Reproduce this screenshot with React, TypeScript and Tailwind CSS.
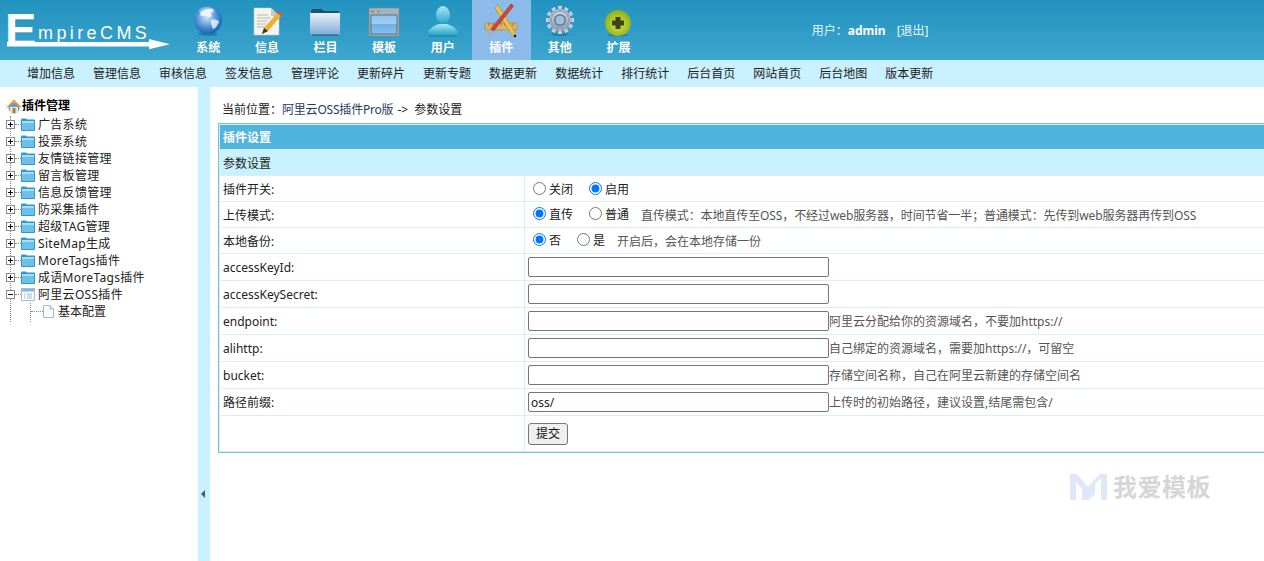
import React from "react";

const Globe = () => (
  <svg width="34" height="34" viewBox="0 0 34 34">
    <defs>
      <radialGradient id="gl" cx="0.45" cy="0.4" r="0.65">
        <stop offset="0" stopColor="#cfe6f8" />
        <stop offset="0.55" stopColor="#4d93d8" />
        <stop offset="1" stopColor="#0f5aa8" />
      </radialGradient>
    </defs>
    <ellipse cx="17" cy="31" rx="10" ry="2" fill="#0f5f86" opacity="0.45" />
    <circle cx="17" cy="17" r="14" fill="url(#gl)" />
    <path d="M10 9c3-3 8-4 11-3 2 1 1 3-1 3-1 2 2 3 0 5-2 1-3 0-5-1-2-1-3 1-5 0-1-1-1-3 0-4z" fill="#f2f8fc" opacity="0.9" />
    <path d="M20 17c3-1 6 0 8 1-1 4-3 7-6 8-1-3-3-6-2-9z" fill="#e7f2fa" opacity="0.85" />
    <ellipse cx="16" cy="8" rx="8" ry="4" fill="#fff" opacity="0.3" />
  </svg>
);

const Doc = () => (
  <svg width="34" height="34" viewBox="0 0 34 34">
    <path d="M4 5h17l8 8v19H4z" fill="#f4f3ec" stroke="#cfcfc4" strokeWidth="0.5" />
    <path d="M21 5v8h8z" fill="#c9c9bf" />
    <path d="M7 12h11M7 15h13M7 18h10M7 21h9M7 24h8" stroke="#a9a9a0" strokeWidth="0.8" />
    <path d="M12 31l2-6L27 10l4 3-13 15z" fill="#efb12d" />
    <path d="M27 10l2-2 4 3-2 2z" fill="#d65a42" />
    <path d="M12 31l2-6 4 3z" fill="#3b3125" />
  </svg>
);

const Folder = () => (
  <svg width="34" height="34" viewBox="0 0 34 34">
    <defs>
      <linearGradient id="fo" x1="0" y1="0" x2="0" y2="1">
        <stop offset="0" stopColor="#eaf1f6" />
        <stop offset="1" stopColor="#7fabd6" />
      </linearGradient>
    </defs>
    <path d="M3 9c0-2 1-3 2-3h8c1 0 2 1 3 2h14c1 0 1 1 1 2v1H3z" fill="#1f4f72" />
    <path d="M2 10h30v19c0 2-1 3-2 3H4c-1 0-2-1-2-3z" fill="url(#fo)" />
    <path d="M4 32h26" stroke="#1f5f85" strokeWidth="1.200" />
  </svg>
);

const WindowIcon = () => (
  <svg width="34" height="34" viewBox="0 0 34 34">
    <defs>
      <linearGradient id="wi" x1="0" y1="0" x2="0" y2="1">
        <stop offset="0" stopColor="#8fc4ec" />
        <stop offset="0.49" stopColor="#9fd0f2" />
        <stop offset="0.5" stopColor="#6eb0e2" />
        <stop offset="1" stopColor="#86bfe9" />
      </linearGradient>
    </defs>
    <rect x="2" y="5" width="30" height="28" fill="#a5b3ba" stroke="#7a8890" strokeWidth="0.7" />
    <rect x="4" y="12" width="26" height="19" fill="url(#wi)" stroke="#39566a" strokeWidth="0.7" />
    <circle cx="5.500" cy="8.500" r="1" fill="#cc4a3a" />
    <circle cx="8.500" cy="8.500" r="1" fill="#d7b33a" />
    <circle cx="11.500" cy="8.500" r="1" fill="#4ca346" />
  </svg>
);

const User = () => (
  <svg width="34" height="34" viewBox="0 0 34 34">
    <defs>
      <linearGradient id="us" x1="0" y1="0" x2="0" y2="1">
        <stop offset="0" stopColor="#a9e8f2" />
        <stop offset="1" stopColor="#25a4c4" />
      </linearGradient>
    </defs>
    <ellipse cx="17" cy="12" rx="7" ry="9" fill="url(#us)" />
    <path d="M2 32c0-7 6-9 11-11h8c5 2 11 4 11 11z" fill="url(#us)" />
    <path d="M3 33h28" stroke="#1b7fa1" strokeWidth="1" />
  </svg>
);

const Tools = () => (
  <svg width="36" height="36" viewBox="0 0 36 36">
    <path d="M2 21h32v7H2z" fill="#d9b564" stroke="#a78537" strokeWidth="0.6" />
    <path d="M6 21v3M10 21v3M14 21v3M18 21v3M22 21v3M26 21v3M30 21v3" stroke="#7c6226" strokeWidth="0.7" />
    <path d="M12 6l3.500-3 17.500 29-1.500 1.500-3-1z" fill="#eec24a" stroke="#9d7d1c" strokeWidth="0.5" />
    <path d="M28 2l2.500 2-20 25-3-1.500z" fill="#cf4540" stroke="#8c2320" strokeWidth="0.5" />
    <path d="M7 27l4 2.500-5 4.500c-2 1-4-1-3-2z" fill="#a8b0b8" />
    <circle cx="32" cy="34" r="1.200" fill="#111" />
  </svg>
);

const Gear = () => (
  <svg width="34" height="34" viewBox="0 0 34 34">
    <defs>
      <linearGradient id="ge" x1="0" y1="0" x2="0" y2="1">
        <stop offset="0" stopColor="#d9dde8" />
        <stop offset="1" stopColor="#8e96ad" />
      </linearGradient>
    </defs>
    <ellipse cx="17" cy="31.500" rx="9" ry="1.500" fill="#15607f" opacity="0.5" />
    <g fill="url(#ge)">
      <circle cx="17" cy="17" r="10.500" />
      {[0, 30, 60, 90, 120, 150, 180, 210, 240, 270, 300, 330].map((a) => (
        <rect key={a} x="15" y="3" width="4" height="6" transform={`rotate(${a} 17 17)`} />
      ))}
    </g>
    <circle cx="17" cy="17" r="6" fill="#4f7fa0" />
    <circle cx="17" cy="17" r="4.500" fill="#9fc0d8" />
  </svg>
);

const Plus = () => (
  <svg width="34" height="34" viewBox="0 0 34 34">
    <defs>
      <radialGradient id="pl" cx="0.5" cy="0.55" r="0.6">
        <stop offset="0" stopColor="#d8e850" />
        <stop offset="1" stopColor="#86a814" />
      </radialGradient>
    </defs>
    <ellipse cx="17" cy="32" rx="10" ry="1.500" fill="#15607f" opacity="0.5" />
    <circle cx="17" cy="20" r="13" fill="url(#pl)" />
    <path d="M14.500 14h5v3.500H23v5h-3.500V26h-5v-3.500H11v-5h3.500z" fill="#3c4210" />
  </svg>
);

const nav: [string, React.ReactNode][] = [
  ["系统", <Globe />],
  ["信息", <Doc />],
  ["栏目", <Folder />],
  ["模板", <WindowIcon />],
  ["用户", <User />],
  ["插件", <Tools />],
  ["其他", <Gear />],
  ["扩展", <Plus />],
];

const sub = ["增加信息", "管理信息", "审核信息", "签发信息", "管理评论", "更新碎片", "更新专题", "数据更新", "数据统计", "排行统计", "后台首页", "网站首页", "后台地图", "版本更新"];

const tree = ["广告系统", "投票系统", "友情链接管理", "留言板管理", "信息反馈管理", "防采集插件", "超级TAG管理", "SiteMap生成", "MoreTags插件", "成语MoreTags插件"];

const Box = ({ minus }: { minus?: boolean }) => (
  <svg width="9" height="9" viewBox="0 0 9 9" className="shrink-0 bg-white relative">
    <rect x="0.500" y="0.500" width="8" height="8" fill="#fff" stroke="#8a8a8a" />
    <path d={minus ? "M2 4.500h5" : "M2 4.500h5M4.500 2v5"} stroke="#111" />
  </svg>
);

const TreeFolder = () => (
  <svg width="14" height="13" viewBox="0 0 14 13" className="shrink-0">
    <path d="M0 2c0-1 .5-1.500 1-1.500h4l1 1h7c.6 0 1 .4 1 1V12c0 .6-.4 1-1 1H1c-.6 0-1-.4-1-1z" fill="#2a9bd1" />
    <rect x="1" y="3" width="12" height="9" fill="#6fc0e8" />
    <rect x="1" y="3" width="12" height="2" fill="#a8def5" />
  </svg>
);

const TreeWindow = () => (
  <svg width="14" height="13" viewBox="0 0 14 13" className="shrink-0">
    <rect x="0.500" y="0.500" width="13" height="12" fill="#f7fbff" stroke="#a9bccd" />
    <rect x="1" y="1" width="12" height="2.500" fill="#7db6e6" />
    <path d="M3 6h1.500M3 8h1.500M3 10h1.500M6 6h5M6 8h5M6 10h5" stroke="#a9bccd" />
  </svg>
);

const TreeDoc = () => (
  <svg width="11" height="13" viewBox="0 0 11 13" className="shrink-0">
    <path d="M.5.500h6.500l3.500 3.500v8.500H.5z" fill="#fbfdff" stroke="#a9b6c4" />
    <path d="M7 .500v3.500h3.500" fill="#dfe8f0" stroke="#a9b6c4" />
  </svg>
);

const Home = () => (
  <svg width="16" height="16" viewBox="0 0 16 16" className="shrink-0">
    <circle cx="8" cy="10" r="5.500" fill="#5da0d8" />
    <path d="M4 9v6h8V9" fill="#e9e6d8" />
    <path d="M0.500 9L8 1.500 15.500 9l-1.500.5L8 4 2 9.500z" fill="#e89a2c" />
    <rect x="6.500" y="10" width="3" height="5" fill="#b9792a" />
  </svg>
);

const Radio = ({ checked, label, gap }: { checked?: boolean; label: string; gap?: boolean }) => (
  <label className={`inline-flex items-center ${gap ? "ml-[16px]" : "ml-[5px]"}`}>
    <input type="radio" defaultChecked={checked} name={label} className="w-[13px] h-[13px] mr-[3px] -mt-[2px]" />
    <span>{label}</span>
  </label>
);

const Row = ({ label, h, children }: { label?: string; h: string; children: React.ReactNode }) => (
  <tr>
    <td className={`${h} bg-white pl-[3px] align-middle`}>{label}</td>
    <td className={`${h} bg-white pl-[3px] align-middle whitespace-nowrap`}>{children}</td>
  </tr>
);

const Field = ({ value, note }: { value?: string; note?: string }) => (
  <div className="flex items-center">
    <input
      defaultValue={value}
      className="w-[301px] h-[20px] shrink-0 border border-[#767676] rounded-[2px] bg-white px-[2px] text-[12px] text-[#222] outline-none"
    />
    {note && <span className="text-[#555]">{note}</span>}
  </div>
);

export default function App() {
  return (
    <div className="relative w-[1264px] h-[561px] overflow-hidden bg-white text-[12px] leading-[17px] text-[#222] font-['Noto_Sans','Noto_Sans_CJK_SC',sans-serif]">
      <header className="h-[60px] flex bg-gradient-to-b from-[#2192bf] to-[#3ca6ce]">
        <svg width="179" height="60" viewBox="0 0 179 60" className="shrink-0">
          <text x="5" y="46" fontSize="47" fontWeight="700" fill="#fff" fontFamily="'Liberation Sans',sans-serif">E</text>
          <text x="38" y="39" fontSize="18" fill="#fff" letterSpacing="3.400" fontFamily="'Liberation Sans',sans-serif">mpireCMS</text>
          <rect x="7" y="42" width="145" height="4.500" fill="#fff" />
          <path d="M149 39l21 5.200-21 5z" fill="#fff" />
        </svg>
        <nav className="flex">
          {nav.map(([t, icon]) => (
            <div key={t} className={`w-[58.6px] flex flex-col items-center pt-[2px] ${t === "插件" ? "bg-[#8cbbea]" : ""}`}>
              <div className="h-[36px] flex items-center justify-center">{icon}</div>
              <div className="font-bold text-white leading-[18px] pt-[1px]">{t}</div>
            </div>
          ))}
        </nav>
        <div className="ml-[164px] pt-[22px] text-[#e6f7ff] whitespace-nowrap">
          用户：<b className="text-white">admin</b>
          <span className="ml-[11px]">[退出]</span>
        </div>
      </header>

      <div className="h-[27px] bg-[#c9f1ff] flex items-center pl-[27px] gap-[18px] whitespace-nowrap">
        {sub.map((s) => (
          <span key={s}>{s}</span>
        ))}
      </div>

      <div className="flex h-[474px]">
        <aside className="relative w-[198px] shrink-0 pl-[6px] pt-[10px]">
          <div className="flex items-center h-[17px] font-bold text-black">
            <Home />
            <span>插件管理</span>
          </div>
          <div className="relative mt-[2px]">
            <div className="absolute left-[4px] top-0 h-[206px] border-l border-dotted border-[#888]" />
            <div className="absolute left-[24px] top-[187px] h-[19px] border-l border-dotted border-[#888]" />
            {tree.map((t) => (
              <div key={t} className="relative flex items-center h-[17px] whitespace-nowrap tracking-[0.3px]">
                <Box />
                <span className="w-[6px] border-t border-dotted border-[#888]" />
                <TreeFolder />
                <span className="ml-[3px]">{t}</span>
              </div>
            ))}
            <div className="relative flex items-center h-[17px] whitespace-nowrap tracking-[0.3px]">
              <Box minus />
              <span className="w-[6px] border-t border-dotted border-[#888]" />
              <TreeWindow />
              <span className="ml-[3px]">阿里云OSS插件</span>
            </div>
            <div className="relative flex items-center h-[17px] pl-[25px] whitespace-nowrap">
              <span className="w-[12px] border-t border-dotted border-[#888]" />
              <TreeDoc />
              <span className="ml-[4px]">基本配置</span>
            </div>
          </div>
        </aside>

        <div className="w-[12px] shrink-0 bg-[#c9f1ff] flex justify-center items-start pt-[403px]">
          <svg width="4" height="8" viewBox="0 0 4 8" className="-ml-[2px]">
            <path d="M4 0v8L0 4z" fill="#4f5a60" />
          </svg>
        </div>

        <main className="flex-1 pl-[8px] pt-[14px] min-w-0">
          <div className="pl-[4px] h-[17px] whitespace-nowrap">
            当前位置：<span className="text-[#1f3a5f] tracking-[-0.2px]">阿里云OSS插件Pro版</span>
            <span className="ml-[4px]">-&gt;</span>
            <span className="ml-[6px]">参数设置</span>
          </div>
          <table className="mt-[5px] w-[1100px] border border-[#7dbdd3] border-separate border-spacing-[1px] bg-[#d7f0f6] table-fixed">
            <colgroup>
              <col className="w-[304px]" />
              <col />
            </colgroup>
            <tbody>
              <tr>
                <td colSpan={2} className="h-[24px] bg-[#4fb4de] pl-[3px] font-bold text-white align-middle">插件设置</td>
              </tr>
              <tr>
                <td colSpan={2} className="h-[25px] bg-[#c9f1ff] pl-[3px] pt-[2px] align-middle">参数设置</td>
              </tr>
              <Row label="插件开关:" h="h-[25px] pt-[2px]">
                <Radio label="关闭" />
                <Radio label="启用" checked gap />
              </Row>
              <Row label="上传模式:" h="h-[25px] pt-[1px]">
                <Radio label="直传" checked />
                <Radio label="普通" gap />
                <span className="ml-[12px] text-[#555] tracking-[-0.1px]">直传模式：本地直传至OSS，不经过web服务器，时间节省一半；普通模式：先传到web服务器再传到OSS</span>
              </Row>
              <Row label="本地备份:" h="h-[25px] pt-[1px]">
                <Radio label="否" checked />
                <Radio label="是" gap />
                <span className="ml-[12px] text-[#555]">开启后，会在本地存储一份</span>
              </Row>
              <Row label="accessKeyId:" h="h-[26px]"><Field /></Row>
              <Row label="accessKeySecret:" h="h-[26px]"><Field /></Row>
              <Row label="endpoint:" h="h-[26px]"><Field note="阿里云分配给你的资源域名，不要加https://" /></Row>
              <Row label="alihttp:" h="h-[26px]"><Field note="自己绑定的资源域名，需要加https://，可留空" /></Row>
              <Row label="bucket:" h="h-[26px]"><Field note="存储空间名称，自己在阿里云新建的存储空间名" /></Row>
              <Row label="路径前缀:" h="h-[26px]"><Field value="oss/" note="上传时的初始路径，建议设置,结尾需包含/" /></Row>
              <Row h="h-[35px]">
                <button className="block w-[40px] h-[22px] border border-[#767676] rounded-[3px] bg-[#efefef] text-[#111] text-[12px]">提交</button>
              </Row>
            </tbody>
          </table>
        </main>
      </div>

      <div className="absolute left-[1070px] top-[472px] flex items-center gap-[6px]">
        <svg width="37" height="30" viewBox="0 0 37 30">
          <path d="M0 2h7l11 13v13h-6V17L6 10v18H0z" fill="#dde9f8" />
          <path d="M37 2h-7L18 15v13h1l6-6V12l6-6v22h6z" fill="#dde9f8" />
        </svg>
        <span className="text-[24px] leading-[30px] font-bold tracking-[0.5px] text-[#d6d6d6] whitespace-nowrap">我爱模板</span>
      </div>
    </div>
  );
}
